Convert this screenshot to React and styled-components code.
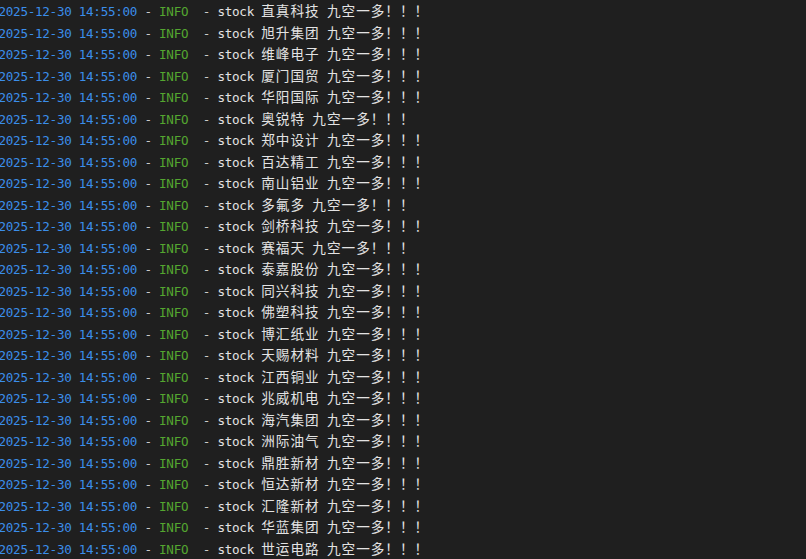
import styled, { createGlobalStyle } from 'styled-components'

const GlobalStyle = createGlobalStyle`
  html, body {
    margin: 0;
    padding: 0;
    background: #1f1f1f;
  }
  body {
    overflow: hidden;
  }
`

const Terminal = styled.div`
  width: 806px;
  height: 559px;
  overflow: hidden;
  background: #1f1f1f;
  box-sizing: border-box;
  padding-top: 0;
`

const Log = styled.div`
  margin-left: -1.5px;
  display: flex;
  flex-direction: column;
`

const Line = styled.div`
  font-family: "DejaVu Sans Mono", "Liberation Mono", monospace;
  font-size: 12.6px;
  letter-spacing: -0.285px;
  line-height: 21.52px;
  height: 21.52px;
  white-space: pre;
  color: #d4d4d4;
`

const Time = styled.span`
  color: #3b8eea;
`

const Dash = styled.span`
  color: #cccccc;
`

const Level = styled.span`
  color: #54a630;
`

const Text = styled.span`
  color: #e3e3e3;
`

const Cjk = styled.span`
  font-family: "Noto Sans CJK SC", sans-serif;
  font-size: 13.6px;
  letter-spacing: 1px;
  color: #e3e3e3;
`

const stocks = [
  '直真科技', '旭升集团', '维峰电子', '厦门国贸', '华阳国际', '奥锐特',
  '郑中设计', '百达精工', '南山铝业', '多氟多', '剑桥科技', '赛福天',
  '泰嘉股份', '同兴科技', '佛塑科技', '博汇纸业', '天赐材料', '江西铜业',
  '兆威机电', '海汽集团', '洲际油气', '鼎胜新材', '恒达新材', '汇隆新材',
  '华蓝集团', '世运电路',
]

function LogLine({ name }) {
  return (
    <Line>
      <Time>2025-12-30 14:55:00</Time>
      <Dash> - </Dash>
      <Level>INFO</Level>
      <Dash>  - </Dash>
      <Text>stock </Text>
      <Cjk>{name}</Cjk>
      <Text> </Text>
      <Cjk>九空一多！！！</Cjk>
    </Line>
  )
}

export default function App() {
  return (
    <Terminal>
      <GlobalStyle />
      <Log>
        {stocks.map((s) => (
          <LogLine key={s} name={s} />
        ))}
      </Log>
    </Terminal>
  )
}
